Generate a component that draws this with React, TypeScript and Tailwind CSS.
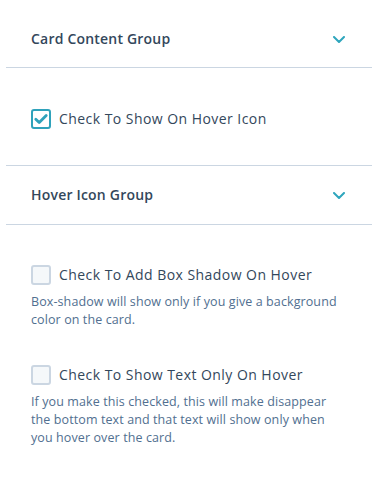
import React, { useState } from 'react';

const font = { fontFamily: '"Open Sans", "Noto Sans", sans-serif' };

const Chevron = () => (
  <svg width="12" height="7" viewBox="0 0 12 7" fill="none" className="shrink-0">
    <path d="M1 1l5 5 5-5" stroke="#2fa6bd" strokeWidth="2" strokeLinecap="round" strokeLinejoin="round" />
  </svg>
);

interface CheckboxProps {
  checked: boolean;
  onToggle: () => void;
  label: string;
}

const Checkbox: React.FC<CheckboxProps> = ({ checked, onToggle, label }) => (
  <label className="flex items-center gap-2 cursor-pointer">
    <button
      type="button"
      onClick={onToggle}
      className={`w-5 h-5 shrink-0 rounded-[3px] border-2 flex items-center justify-center ${
        checked ? 'border-[#2fa2bb] bg-white' : 'border-[#cbd6e2] bg-[#f5f8fa]'
      }`}
    >
      {checked && (
        <svg width="16" height="16" viewBox="0 0 16 16" fill="none">
          <path d="M2.8 8.2l3.4 3.4L13.2 4.4" stroke="#2fa2bb" strokeWidth="2.8" strokeLinecap="round" strokeLinejoin="round" />
        </svg>
      )}
    </button>
    <span className="text-[14px] leading-5 font-medium tracking-[0.45px] text-[#33475b]">{label}</span>
  </label>
);

const GroupHeader: React.FC<{ title: string; className?: string }> = ({ title, className }) => (
  <div className={`flex items-center justify-between pl-[25px] pr-[27px] border-b border-[#cbd6e2] ${className ?? ''}`}>
    <span className="text-[14px] leading-5 font-semibold tracking-[0.2px] text-[#33475b]">{title}</span>
    <Chevron />
  </div>
);

export default function App() {
  const [showIcon, setShowIcon] = useState(true);
  const [boxShadow, setBoxShadow] = useState(false);
  const [textOnly, setTextOnly] = useState(false);

  return (
    <div className="w-[378px] h-[482px] bg-white" style={font}>
      <div className="px-[6px]">
        <GroupHeader title="Card Content Group" className="pt-[29px] pb-[18px]" />

        <div className="pl-[25px] pt-[41px] pb-[36px] border-b border-[#cbd6e2]">
          <Checkbox checked={showIcon} onToggle={() => setShowIcon(!showIcon)} label="Check To Show On Hover Icon" />
        </div>

        <GroupHeader title="Hover Icon Group" className="pt-[19px] pb-[19px]" />

        <div className="pl-[25px] pr-[30px] pt-[40px]">
          <Checkbox checked={boxShadow} onToggle={() => setBoxShadow(!boxShadow)} label="Check To Add Box Shadow On Hover" />
          <p className="mt-2 text-[12.5px] leading-[18px] tracking-[0.1px] text-[#516f90]">
            Box-shadow will show only if you give a background color on the card.
          </p>

          <div className="mt-9">
            <Checkbox checked={textOnly} onToggle={() => setTextOnly(!textOnly)} label="Check To Show Text Only On Hover" />
            <p className="mt-2 text-[12.5px] leading-[18px] tracking-[0.1px] text-[#516f90]">
              If you make this checked, this will make disappear the bottom text and that text will show only when you hover over the card.
            </p>
          </div>
        </div>
      </div>
    </div>
  );
}
